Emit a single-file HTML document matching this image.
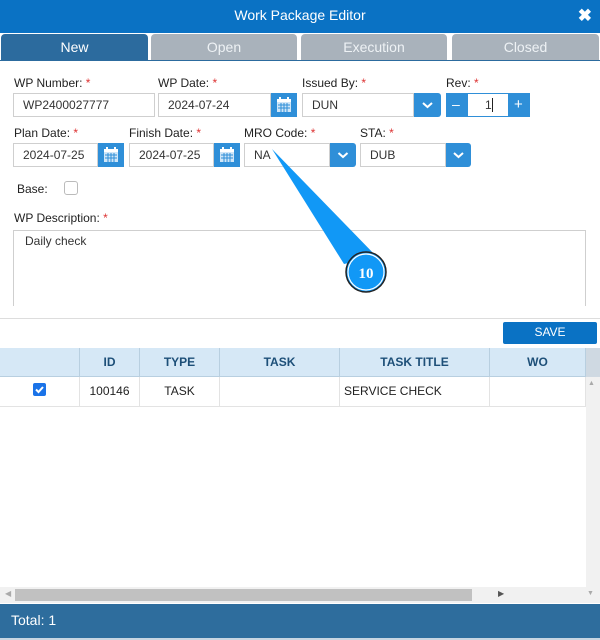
<!DOCTYPE html>
<html><head><style>
*{box-sizing:border-box;margin:0;padding:0}
body{width:600px;height:640px;position:relative;background:#fff;font-family:"Liberation Sans",Arial,sans-serif;font-size:12px;color:#333;overflow:hidden}
.a{position:absolute}
.hdr{left:0;top:0;width:600px;height:33px;background:#0a72c4;color:#fff;font-size:14px;text-align:center;line-height:31px}
.tab{top:34px;height:26px;background:#a9b2bb;color:#eef2f5;font-size:14px;text-align:center;line-height:27px;border-radius:4px 4px 0 0}
.lbl{font-size:12px;color:#222}
.lbl b{color:#d33;font-weight:normal}
.in{height:24px;border:1px solid #cfcfcf;background:#fff;line-height:22px;padding-left:9px;font-size:12px;color:#333}
.btn{height:24px;background:#2f8fd8;color:#fff}
.cal{width:26px;height:24px;background:#2f8fd8}
.th{top:348px;height:29px;border-right:1px solid #b8cfe0;text-align:center;line-height:29px;font-weight:bold;color:#1d4f78;font-size:12px}
.td{top:377px;height:29px;border-right:1px solid #e3e3e3;line-height:29px;font-size:12px;color:#222;text-align:center}
</style></head><body>
<div class="a hdr">Work Package Editor</div>
<div class="a" style="right:8px;top:6px;color:#fff;font-size:17px;font-weight:bold">✖</div>
<div class="a" style="left:0;top:33px;width:600px;height:28px;background:#fff"></div>
<div class="a tab" style="left:1px;width:147px;background:#2c6b9e;color:#fff">New</div>
<div class="a tab" style="left:151px;width:146px">Open</div>
<div class="a tab" style="left:301px;width:146px">Execution</div>
<div class="a tab" style="left:452px;width:147px">Closed</div>
<div class="a" style="left:0;top:60px;width:600px;height:1px;background:#2c6b9e"></div>

<div class="a lbl" style="left:14px;top:76px">WP Number: <b>*</b></div>
<div class="a lbl" style="left:158px;top:76px">WP Date: <b>*</b></div>
<div class="a lbl" style="left:302px;top:76px">Issued By: <b>*</b></div>
<div class="a lbl" style="left:446px;top:76px">Rev: <b>*</b></div>
<div class="a in" style="left:13px;top:93px;width:142px">WP2400027777</div>
<div class="a in" style="left:158px;top:93px;width:113px">2024-07-24</div>
<div class="a cal" style="left:271px;top:93px"><svg width="26" height="24"><rect x="6" y="6" width="14" height="13" fill="#cfe6f8"/><rect x="6" y="6" width="14" height="3" fill="#fff"/><rect x="8" y="4" width="2" height="4" fill="#fff"/><rect x="16" y="4" width="2" height="4" fill="#fff"/><path d="M7 12h12M7 15h12M10 10v9M13 10v9M16 10v9" stroke="#2f8fd8" stroke-width="1"/></svg></div>
<div class="a in" style="left:302px;top:93px;width:112px">DUN</div>
<div class="a btn" style="left:414px;top:93px;width:27px;border-radius:0 3px 3px 0"><svg width="27" height="24"><path d="M9 10l4.5 4 4.5-4" stroke="#fff" stroke-width="2" fill="none"/></svg></div>
<div class="a btn" style="left:446px;top:93px;width:84px"></div>
<div class="a" style="left:452px;top:96px;color:#fff;font-size:14px">–</div>
<div class="a" style="left:468px;top:94px;width:40px;height:22px;background:#fff"></div>
<div class="a" style="left:485px;top:98px;font-size:12px;color:#333">1</div>
<div class="a" style="left:492px;top:98px;width:1px;height:14px;background:#222"></div>
<div class="a" style="left:514px;top:96px;color:#fff;font-size:15px">+</div>

<div class="a lbl" style="left:14px;top:126px">Plan Date: <b>*</b></div>
<div class="a lbl" style="left:129px;top:126px">Finish Date: <b>*</b></div>
<div class="a lbl" style="left:244px;top:126px">MRO Code: <b>*</b></div>
<div class="a lbl" style="left:360px;top:126px">STA: <b>*</b></div>
<div class="a in" style="left:13px;top:143px;width:85px">2024-07-25</div>
<div class="a cal" style="left:98px;top:143px"><svg width="26" height="24"><rect x="6" y="6" width="14" height="13" fill="#cfe6f8"/><rect x="6" y="6" width="14" height="3" fill="#fff"/><rect x="8" y="4" width="2" height="4" fill="#fff"/><rect x="16" y="4" width="2" height="4" fill="#fff"/><path d="M7 12h12M7 15h12M10 10v9M13 10v9M16 10v9" stroke="#2f8fd8" stroke-width="1"/></svg></div>
<div class="a in" style="left:129px;top:143px;width:85px">2024-07-25</div>
<div class="a cal" style="left:214px;top:143px"><svg width="26" height="24"><rect x="6" y="6" width="14" height="13" fill="#cfe6f8"/><rect x="6" y="6" width="14" height="3" fill="#fff"/><rect x="8" y="4" width="2" height="4" fill="#fff"/><rect x="16" y="4" width="2" height="4" fill="#fff"/><path d="M7 12h12M7 15h12M10 10v9M13 10v9M16 10v9" stroke="#2f8fd8" stroke-width="1"/></svg></div>
<div class="a in" style="left:244px;top:143px;width:86px">NA</div>
<div class="a btn" style="left:330px;top:143px;width:26px;border-radius:0 3px 3px 0"><svg width="26" height="24"><path d="M8.5 10l4.5 4 4.5-4" stroke="#fff" stroke-width="2" fill="none"/></svg></div>
<div class="a in" style="left:360px;top:143px;width:86px">DUB</div>
<div class="a btn" style="left:446px;top:143px;width:25px;border-radius:0 3px 3px 0"><svg width="25" height="24"><path d="M8 10l4.5 4 4.5-4" stroke="#fff" stroke-width="2" fill="none"/></svg></div>

<div class="a lbl" style="left:17px;top:182px">Base:</div>
<div class="a" style="left:64px;top:181px;width:14px;height:14px;border:1px solid #bbb;border-radius:3px"></div>

<div class="a lbl" style="left:14px;top:211px">WP Description: <b>*</b></div>
<div class="a" style="left:13px;top:230px;width:573px;height:76px;border:1px solid #cfcfcf;border-bottom:none;padding:3px 11px;font-size:12px">Daily check</div>
<div class="a" style="left:0;top:318px;width:600px;height:1px;background:#ddd"></div>

<div class="a" style="left:503px;top:322px;width:94px;height:22px;background:#0a72c4;color:#fff;text-align:center;line-height:21px;font-size:12px;border-radius:2px">SAVE</div>

<div class="a" style="left:0;top:348px;width:586px;height:29px;background:#d6e8f6;border-bottom:1px solid #b8cfe0"></div>
<div class="a" style="left:586px;top:348px;width:14px;height:29px;background:#cfd9e2"></div>
<div class="a th" style="left:0;width:80px"></div>
<div class="a th" style="left:80px;width:60px">ID</div>
<div class="a th" style="left:140px;width:80px">TYPE</div>
<div class="a th" style="left:220px;width:120px">TASK</div>
<div class="a th" style="left:340px;width:150px">TASK TITLE</div>
<div class="a th" style="left:490px;width:96px">WO</div>

<div class="a" style="left:0;top:406px;width:586px;height:1px;background:#e3e3e3"></div>
<div class="a td" style="left:0;width:80px"></div>
<div class="a" style="left:33px;top:383px;width:13px;height:13px;background:#1a73e8;border-radius:2px"><svg width="13" height="13"><path d="M3 6.5l2.5 2.5 4.5-5" stroke="#fff" stroke-width="2" fill="none"/></svg></div>
<div class="a td" style="left:80px;width:60px">100146</div>
<div class="a td" style="left:140px;width:80px">TASK</div>
<div class="a td" style="left:220px;width:120px"></div>
<div class="a td" style="left:340px;width:150px;text-align:left;padding-left:4px">SERVICE CHECK</div>
<div class="a td" style="left:490px;width:96px"></div>

<div class="a" style="left:586px;top:377px;width:14px;height:210px;background:#f1f1f1"></div>
<div class="a" style="left:588px;top:380px;color:#aaa;font-size:7px">▲</div>
<div class="a" style="left:0;top:587px;width:600px;height:16px;background:#f1f1f1"></div>
<div class="a" style="left:15px;top:589px;width:457px;height:12px;background:#c1c1c1"></div>
<div class="a" style="left:5px;top:589px;color:#aaa;font-size:8px">◀</div>
<div class="a" style="left:498px;top:589px;color:#555;font-size:8px">▶</div>
<div class="a" style="left:587px;top:590px;color:#aaa;font-size:7px">▼</div>

<div class="a" style="left:0;top:604px;width:600px;height:34px;background:#2e6d9d;color:#fff;font-size:14px;line-height:33px;padding-left:11px">Total: 1</div>
<div class="a" style="left:0;top:638px;width:600px;height:2px;background:#c8d6e2"></div>

<svg class="a" style="left:0;top:0" width="600" height="640">
<path d="M272 149 L344 264 L377 257 Z" fill="#1198f6"/>
<circle cx="366" cy="272" r="20" fill="#1198f6" stroke="#222" stroke-width="1.5"/>
<circle cx="366" cy="272" r="18" fill="none" stroke="#fff" stroke-width="1.2"/>
<text x="366" y="278" text-anchor="middle" fill="#fff" font-family="Liberation Serif,serif" font-weight="bold" font-size="15">10</text>
</svg>
</body></html>
